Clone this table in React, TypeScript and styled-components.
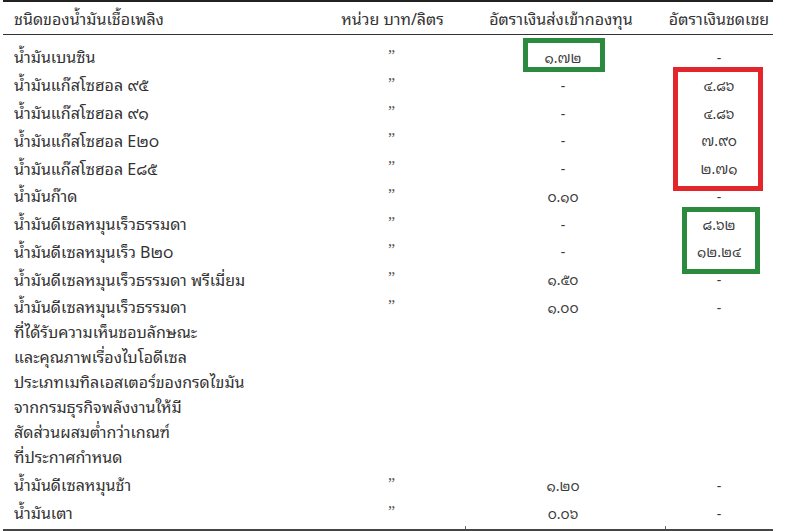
import React from "react";
import styled, { createGlobalStyle } from "styled-components";

type Row = {
  name: string[];
  unit: boolean;
  fund: string;
  comp: string;
};

const rows: Row[] = [
  { name: ["น้ำมันเบนซิน"], unit: true, fund: "๑.๗๒", comp: "-" },
  { name: ["น้ำมันแก๊สโซฮอล ๙๕"], unit: true, fund: "-", comp: "๔.๘๖" },
  { name: ["น้ำมันแก๊สโซฮอล ๙๑"], unit: true, fund: "-", comp: "๔.๘๖" },
  { name: ["น้ำมันแก๊สโซฮอล E๒๐"], unit: true, fund: "-", comp: "๗.๙๐" },
  { name: ["น้ำมันแก๊สโซฮอล E๘๕"], unit: true, fund: "-", comp: "๒.๗๑" },
  { name: ["น้ำมันก๊าด"], unit: true, fund: "๐.๑๐", comp: "-" },
  { name: ["น้ำมันดีเซลหมุนเร็วธรรมดา"], unit: true, fund: "-", comp: "๘.๖๒" },
  { name: ["น้ำมันดีเซลหมุนเร็ว B๒๐"], unit: true, fund: "-", comp: "๑๒.๒๔" },
  { name: ["น้ำมันดีเซลหมุนเร็วธรรมดา พรีเมี่ยม"], unit: true, fund: "๑.๕๐", comp: "-" },
  {
    name: [
      "น้ำมันดีเซลหมุนเร็วธรรมดา",
      "ที่ได้รับความเห็นชอบลักษณะ",
      "และคุณภาพเรื่องไบโอดีเซล",
      "ประเภทเมทิลเอสเตอร์ของกรดไขมัน",
      "จากกรมธุรกิจพลังงานให้มี",
      "สัดส่วนผสมต่ำกว่าเกณฑ์",
      "ที่ประกาศกำหนด",
    ],
    unit: true,
    fund: "๑.๐๐",
    comp: "-",
  },
  { name: ["น้ำมันดีเซลหมุนช้า"], unit: true, fund: "๑.๒๐", comp: "-" },
  { name: ["น้ำมันเตา"], unit: true, fund: "๐.๐๖", comp: "-" },
];

// annotation boxes drawn over the table (grid lines are 1-based, row 1 = first body row)
const marks = [
  { color: "#2b8a3e", col: 3, from: 1, to: 2, left: 58, right: 60, top: -5, bottom: -1 },
  { color: "#e3262b", col: 4, from: 2, to: 6, left: 8, right: 10, top: -4, bottom: -9 },
  { color: "#2b8a3e", col: 4, from: 7, to: 9, left: 17, right: 13, top: -3, bottom: -9 },
];

const App: React.FC = () => {
  return (
    <>
      <GlobalStyle />
      <Page>
        <Table>
          <HeaderRow>
            <HeadCell align="left">ชนิดของน้ำมันเชื้อเพลิง</HeadCell>
            <HeadCell shift={10}>หน่วย บาท/ลิตร</HeadCell>
            <HeadCell shift={8}>อัตราเงินส่งเข้ากองทุน</HeadCell>
            <HeadCell>อัตราเงินชดเชย</HeadCell>
          </HeaderRow>
          <Body>
            {rows.map((r, i) => (
              <React.Fragment key={i}>
                <NameCell style={{ gridRow: i + 1 }}>
                  {r.name.map((l, j) => (
                    <div key={j}>{l}</div>
                  ))}
                </NameCell>
                <Ditto style={{ gridRow: i + 1 }}>{r.unit ? "”" : ""}</Ditto>
                <ValueCell col={3} style={{ gridRow: i + 1 }}>
                  {r.fund}
                </ValueCell>
                <ValueCell col={4} style={{ gridRow: i + 1 }}>
                  {r.comp}
                </ValueCell>
              </React.Fragment>
            ))}
            {marks.map((m, i) => (
              <Mark
                key={i}
                color={m.color}
                style={{
                  gridColumn: m.col,
                  gridRow: `${m.from} / ${m.to}`,
                  margin: `${m.top}px ${m.right}px ${m.bottom}px ${m.left}px`,
                }}
              />
            ))}
          </Body>
          <Ticks>
            <Tick />
            <Tick />
            <Tick line />
            <Tick line />
          </Ticks>
        </Table>
      </Page>
    </>
  );
};
export default App;

const GlobalStyle = createGlobalStyle`
  html, body {
    margin: 0;
    padding: 0;
    background: #ffffff;
  }
  body {
    font-family: "Noto Sans Thai Looped", "Noto Sans Thai", Tahoma, "Noto Sans", "DejaVu Sans", sans-serif;
    color: #333333;
  }
`;

const Page = styled.div`
  width: 785px;
  height: 531px;
  padding: 0 0 0 3px;
  box-sizing: border-box;
  overflow: hidden;
`;

const Table = styled.div`
  width: 770px;
  border-top: 2px solid #222;
`;

const cols = "327px 135px 200px 108px";

const HeaderRow = styled.div`
  display: grid;
  grid-template-columns: ${cols};
  height: 32px;
  align-items: center;
  border-bottom: 1.5px solid #333;
  font-size: 16px;
`;

const HeadCell = styled.div<{ align?: "left"; shift?: number }>`
  text-align: ${(p) => (p.align === "left" ? "left" : "center")};
  padding-left: ${(p) => (p.align === "left" ? "11px" : "0")};
  padding-right: ${(p) => p.shift ?? 0}px;
  white-space: nowrap;
`;

const Body = styled.div`
  display: grid;
  grid-template-columns: ${cols};
  padding-top: 8px;
  font-size: 16px;
  line-height: 25px;
`;

const NameCell = styled.div`
  grid-column: 1;
  padding: 1.4px 0 1.4px 11px;
  white-space: nowrap;
`;

const Ditto = styled.div`
  grid-column: 2;
  text-align: center;
  padding: 2px 12px 0 0;
  font-family: "Liberation Serif", serif;
  font-size: 16px;
  line-height: 22px;
  color: #555;
`;

const ValueCell = styled.div<{ col: number }>`
  grid-column: ${(p) => p.col};
  text-align: center;
  padding-top: 3px;
  padding-right: ${(p) => (p.col === 3 ? 4 : 0)}px;
  font-size: 14px;
  line-height: 22px;
  color: #3a3a3a;
`;

const Mark = styled.div<{ color: string }>`
  border: 5px solid ${(p) => p.color};
  pointer-events: none;
`;

const Ticks = styled.div`
  display: grid;
  grid-template-columns: ${cols};
  height: 3px;
  border-bottom: 2px solid #444;
`;

const Tick = styled.div<{ line?: boolean }>`
  border-left: ${(p) => (p.line ? "1px solid #666" : "none")};
`;
